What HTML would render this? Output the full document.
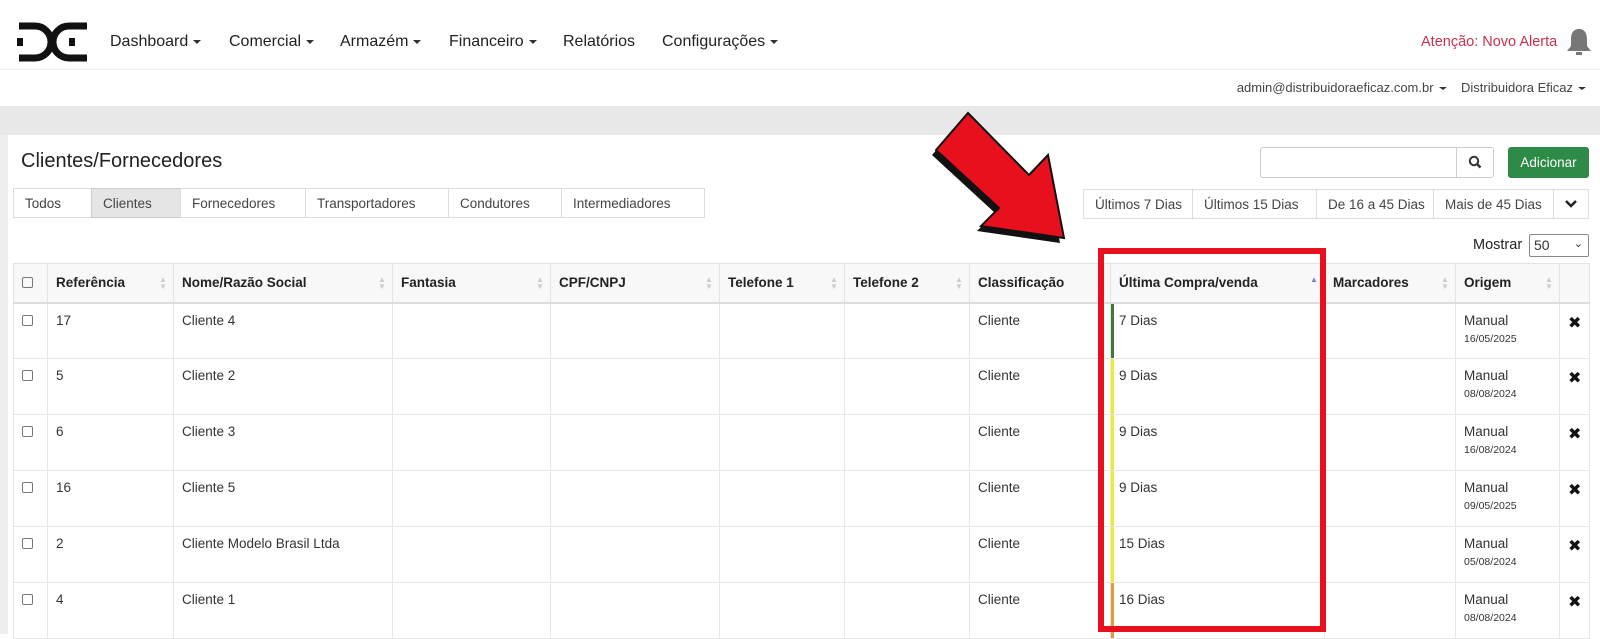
<!DOCTYPE html>
<html><head><meta charset="utf-8"><style>
*{box-sizing:border-box;margin:0;padding:0}
body{width:1600px;height:634px;overflow:hidden;background:#fff;font-family:"Liberation Sans","DejaVu Sans",sans-serif;color:#333;position:relative}
.abs{position:absolute}
.nav a{position:absolute;top:33px;font-size:16px;color:#222;white-space:nowrap}
.caret{display:inline-block;border-top:4px solid #333;border-left:4px solid transparent;border-right:4px solid transparent;vertical-align:middle;margin-left:5px}
.tab{position:absolute;top:188px;height:30px;border:1px solid #ddd;font-size:13.5px;color:#444;padding:7px 11px;background:#fff}
.fb{position:absolute;top:189px;height:30px;border:1px solid #ddd;font-size:13.5px;color:#444;padding:7px 11px;background:#fff;white-space:nowrap}
table{position:absolute;left:13px;top:263px;border-collapse:collapse;font-size:13.5px;table-layout:fixed;width:1576px}
th{height:39px;background:#f8f8f8;text-align:left;font-weight:bold;font-size:13.5px;color:#222;padding:0 8px;border:1px solid #e3e3e3;border-bottom:2px solid #ddd;position:relative}
td{height:56px;vertical-align:top;padding:9px 8px 0;border:1px solid #e6e6e6;color:#333;position:relative}
.sort{position:absolute;right:8px;top:12px;width:6px;color:#ccc;font-size:8px;line-height:7px}
.cb{width:11px;height:11px;border:1px solid #777;border-radius:2px;display:inline-block;margin-top:2px}
.bar{position:absolute;left:0;top:0;bottom:0;width:3px}
small{font-size:10.5px;display:block;margin-top:5px}
.x{font-weight:bold;font-size:16px;color:#111}
</style></head><body>
<svg class="abs" style="left:17px;top:22px" width="72" height="40" viewBox="0 0 72 40">
<path d="M2 4 H18 A16 16 0 0 1 18 36 H2" fill="none" stroke="#111" stroke-width="7"/>
<rect x="0" y="16" width="6" height="8" fill="#111"/>
<path d="M70 4 H52 A16 16 0 0 0 52 36 H70" fill="none" stroke="#111" stroke-width="7"/>
<rect x="52" y="16" width="6" height="8" fill="#111"/>
</svg>
<div class="nav">
<a style="left:110px">Dashboard<span class="caret"></span></a>
<a style="left:229px">Comercial<span class="caret"></span></a>
<a style="left:340px">Armazém<span class="caret"></span></a>
<a style="left:449px">Financeiro<span class="caret"></span></a>
<a style="left:563px">Relatórios</a>
<a style="left:662px">Configurações<span class="caret"></span></a>
</div>
<div class="abs" style="left:1421px;top:34px;font-size:14.5px;color:#c9304f">Atenção: Novo Alerta</div>
<svg class="abs" style="left:1566px;top:27px" width="26" height="30" viewBox="0 0 26 30"><path d="M13 2 C7 2 5 7 5 12 V19 L1 24 H25 L21 19 V12 C21 7 19 2 13 2Z" fill="#777"/><rect x="10" y="25" width="6" height="3" fill="#777"/></svg>
<div class="abs" style="left:0;top:69px;width:1600px;height:1px;background:#eee"></div>
<div class="abs" style="right:14px;top:80px;font-size:13px;color:#444;white-space:nowrap">admin@distribuidoraeficaz.com.br<span class="caret" style="border-top-width:3px"></span>&nbsp;&nbsp;&nbsp;&nbsp;Distribuidora Eficaz<span class="caret" style="border-top-width:3px"></span></div>
<div class="abs" style="left:0;top:106px;width:1600px;height:29px;background:#e8e8e8"></div>
<div class="abs" style="left:0;top:135px;width:8px;height:499px;background:#eee"></div>
<div class="abs" style="left:21px;top:150px;font-size:20px;color:#222">Clientes/Fornecedores</div>
<div class="tab" style="left:13px;width:79px">Todos</div>
<div class="tab" style="left:91px;width:90px;background:#e5e5e5;border-color:#ccc">Clientes</div>
<div class="tab" style="left:180px;width:126px">Fornecedores</div>
<div class="tab" style="left:305px;width:144px">Transportadores</div>
<div class="tab" style="left:448px;width:114px">Condutores</div>
<div class="tab" style="left:561px;width:144px">Intermediadores</div>
<div class="abs" style="left:1260px;top:147px;width:234px;height:31px;border:1px solid #ccc;border-radius:3px"></div>
<div class="abs" style="left:1456px;top:147px;width:38px;height:31px;border-left:1px solid #ccc"></div>
<svg class="abs" style="left:1468px;top:155px" width="14" height="14" viewBox="0 0 14 14"><circle cx="6" cy="6" r="4.2" fill="none" stroke="#333" stroke-width="2"/><path d="M9 9 L12.5 12.5" stroke="#333" stroke-width="2.4"/></svg>
<div class="abs" style="left:1508px;top:147px;width:81px;height:31px;background:#2e8b47;border-radius:3px;color:#fff;font-size:13.5px;text-align:center;line-height:31px">Adicionar</div>
<div class="fb" style="left:1083px;width:110px">Últimos 7 Dias</div>
<div class="fb" style="left:1192px;width:125px">Últimos 15 Dias</div>
<div class="fb" style="left:1316px;width:118px">De 16 a 45 Dias</div>
<div class="fb" style="left:1433px;width:121px">Mais de 45 Dias</div>
<div class="fb" style="left:1553px;width:36px;padding:0"><svg width="34" height="28" viewBox="0 0 34 28"><path d="M12 11 L17 16 L22 11" fill="none" stroke="#222" stroke-width="2.5"/></svg></div>
<div class="abs" style="left:1473px;top:237px;font-size:14.5px;color:#222">Mostrar</div>
<div class="abs" style="left:1529px;top:234px;width:60px;height:23px;border:1px solid #888;border-radius:2px;font-size:14px;padding:2px 4px">50<span style="position:absolute;right:5px;top:2px;font-size:11px">&#8964;</span></div>
<table>
<colgroup><col style="width:34px"><col style="width:126px"><col style="width:219px"><col style="width:158px"><col style="width:169px"><col style="width:125px"><col style="width:125px"><col style="width:141px"><col style="width:214px"><col style="width:131px"><col style="width:104px"><col style="width:30px"></colgroup>
<tr><th><span class="cb"></span></th><th>Referência<span class="sort">▲<br>▼</span></th><th>Nome/Razão Social<span class="sort">▲<br>▼</span></th><th>Fantasia<span class="sort">▲<br>▼</span></th><th>CPF/CNPJ<span class="sort">▲<br>▼</span></th><th>Telefone 1<span class="sort">▲<br>▼</span></th><th>Telefone 2<span class="sort">▲<br>▼</span></th><th>Classificação</th><th>Última Compra/venda<span class="sort" style="color:#7a7fd0">▲</span></th><th>Marcadores<span class="sort">▲<br>▼</span></th><th>Origem<span class="sort">▲<br>▼</span></th><th></th></tr>
<tr><td><span class="cb"></span></td><td>17</td><td>Cliente 4</td><td></td><td></td><td></td><td></td><td>Cliente</td><td><span class="bar" style="background:#3f7a3a"></span>7 Dias</td><td></td><td>Manual<small>16/05/2025</small></td><td class="x">✖</td></tr>
<tr><td><span class="cb"></span></td><td>5</td><td>Cliente 2</td><td></td><td></td><td></td><td></td><td>Cliente</td><td><span class="bar" style="background:#f2ea2a"></span>9 Dias</td><td></td><td>Manual<small>08/08/2024</small></td><td class="x">✖</td></tr>
<tr><td><span class="cb"></span></td><td>6</td><td>Cliente 3</td><td></td><td></td><td></td><td></td><td>Cliente</td><td><span class="bar" style="background:#f2ea2a"></span>9 Dias</td><td></td><td>Manual<small>16/08/2024</small></td><td class="x">✖</td></tr>
<tr><td><span class="cb"></span></td><td>16</td><td>Cliente 5</td><td></td><td></td><td></td><td></td><td>Cliente</td><td><span class="bar" style="background:#f2ea2a"></span>9 Dias</td><td></td><td>Manual<small>09/05/2025</small></td><td class="x">✖</td></tr>
<tr><td><span class="cb"></span></td><td>2</td><td>Cliente Modelo Brasil Ltda</td><td></td><td></td><td></td><td></td><td>Cliente</td><td><span class="bar" style="background:#f2ea2a"></span>15 Dias</td><td></td><td>Manual<small>05/08/2024</small></td><td class="x">✖</td></tr>
<tr><td><span class="cb"></span></td><td>4</td><td>Cliente 1</td><td></td><td></td><td></td><td></td><td>Cliente</td><td><span class="bar" style="background:#e39a35"></span>16 Dias</td><td></td><td>Manual<small>08/08/2024</small></td><td class="x">✖</td></tr>
</table>
<div class="abs" style="left:1098px;top:248px;width:228px;height:384px;border:6px solid #e8101c"></div>
<svg class="abs" style="left:0;top:0" width="1600" height="634">
<polygon points="964,118 1025,180 1044,160 1060,243 977,231 995,213 932,155" fill="#111"/>
<polygon points="968,113 1029,175 1048,155 1064,238 981,226 999,208 936,150" fill="#e8101c" stroke="#111" stroke-width="2"/>
</svg>
</body></html>
